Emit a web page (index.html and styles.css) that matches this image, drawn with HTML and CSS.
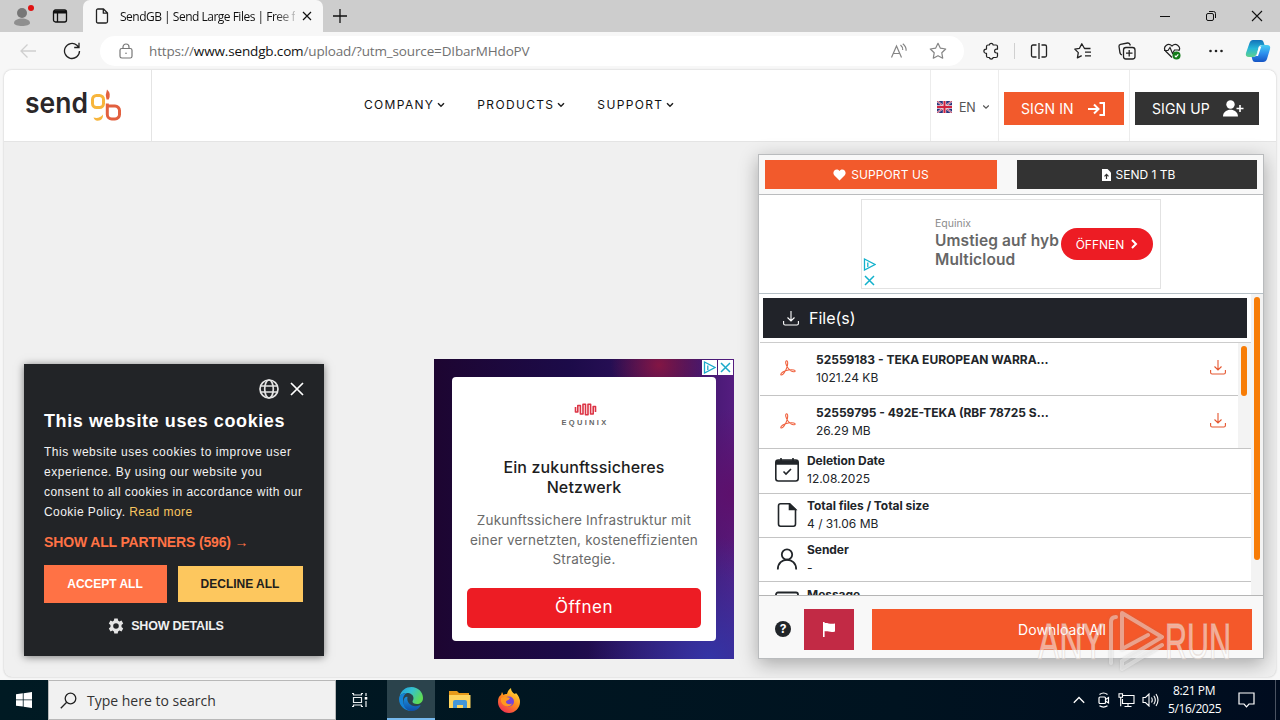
FILE: index.html
```html
<!DOCTYPE html>
<html lang="en">
<head>
<meta charset="utf-8">
<title>SendGB | Send Large Files</title>
<link rel="stylesheet" href="styles.css">
</head>
<body>
<div class="screen">
  <div class="tabstrip">
    <div class="profile"><svg width="24" height="28" viewBox="0 0 24 28"><circle cx="12" cy="13" r="5" fill="#777"/><path d="M4 23c0-6 16-6 16 0 0 4-16 4-16 0" fill="#8f8f8f"/><circle cx="21" cy="8" r="3" fill="#e01212"/></svg></div>
    <svg class="workspaces" width="16" height="16" viewBox="0 0 16 16" fill="none" stroke="#111" stroke-width="1.3"><rect x="1.5" y="2" width="13" height="12" rx="2"/><path d="M2 4h12" stroke-width="3"/><path d="M5.5 5v9"/></svg>
    <div class="tab">
      <svg width="14" height="16" viewBox="0 0 14 16" fill="none" stroke="#222" stroke-width="1.3" stroke-linejoin="round"><path d="M1.5 2.5q0-1.5 1.5-1.5h5.500l4 4v8.500q0 1.500-1.500 1.500h-8q-1.500 0-1.500-1.500zM8.300 1v4.200h4.200"/></svg>
      <span class="tab-title">SendGB | Send Large Files | Free f</span>
      <svg class="tab-x" width="10" height="10" viewBox="0 0 10 10" stroke="#111" stroke-width="1.200"><path d="M1 1l8 8M9 1l-8 8"/></svg>
    </div>
    <svg class="newtab" width="14" height="14" viewBox="0 0 14 14" stroke="#111" stroke-width="1.300"><path d="M7 0v14M0 7h14"/></svg>
    <div class="winbtns">
      <svg width="12" height="12" viewBox="0 0 12 12" stroke="#111"><path d="M1 6.500h10"/></svg>
      <svg width="12" height="12" viewBox="0 0 12 12" fill="none" stroke="#111"><rect x="1.500" y="3.500" width="7" height="7" rx="1.500"/><path d="M4 1.500h4.500q2 0 2 2v4.500"/></svg>
      <svg width="12" height="12" viewBox="0 0 12 12" stroke="#111" stroke-width="1.100"><path d="M1 1l10 10M11 1l-10 10"/></svg>
    </div>
  </div>

  <div class="toolbar">
    <svg class="back" width="18" height="16" viewBox="0 0 18 16" fill="none" stroke="#cfcfcf" stroke-width="1.300"><path d="M17 8H2M8.500 1.500L2 8l6.500 6.500"/></svg>
    <svg class="reload" width="18" height="18" viewBox="0 0 18 18" fill="none" stroke="#222" stroke-width="1.300"><path d="M16.500 9a7.500 7.500 0 1 1-2.600-5.700l1.600 1.700M16 .8v4.700h-4.800"/></svg>
    <div class="address">
      <svg class="lock" width="14" height="16" viewBox="0 0 14 16" fill="none" stroke="#777" stroke-width="1.200"><rect x="1" y="5.500" width="12" height="9.500" rx="1.800"/><path d="M4 5.500V4a3 3 0 0 1 6 0v1.500"/><circle cx="7" cy="10.200" r=".8" fill="#777" stroke="none"/></svg>
      <span class="url">https://<b>www.sendgb.com</b>/upload/?utm_source=DIbarMHdoPV</span>
      <svg class="read" width="18" height="16" viewBox="0 0 18 16" fill="none" stroke="#858585" stroke-width="1.200"><path d="M1.500 14.500L6.500 3l5 11.500M3.300 10.500h6.400M10.500 2q2.500 2 2.200 5M12.800.8q3.700 3 3.300 7"/></svg>
      <svg class="star" width="18" height="18" viewBox="0 0 18 18" fill="none" stroke="#858585" stroke-width="1.200" stroke-linejoin="round"><path d="M9 1.300l2.400 4.900 5.300.8-3.900 3.800.9 5.400L9 13.700l-4.700 2.500.9-5.400L1.300 7l5.300-.8z"/></svg>
    </div>
    <div class="tools">
      <svg width="18" height="18" viewBox="0 0 18 18" fill="none" stroke="#222" stroke-width="1.200" stroke-linejoin="round"><path d="M4.500 4.500q0-1.500 1.500-1.500h1.300a2 2 0 0 1 3.900 0h2.800q1.500 0 1.500 1.500v2.700h-1a1.900 1.900 0 0 0 0 3.800h1v3q0 1.500-1.500 1.500h-2.800a2 2 0 0 1-3.900 0H6q-1.500 0-1.500-1.500v-2.700H4a2.100 2.100 0 0 1 0-4.200h.5z"/></svg>
      <i class="sep"></i>
      <svg width="18" height="18" viewBox="0 0 18 18" fill="none" stroke="#222" stroke-width="1.300"><path d="M6.500 3H3Q1.500 3 1.500 4.500v9Q1.500 15 3 15h3.500M11.500 3H15q1.500 0 1.500 1.500v9Q16.500 15 15 15h-3.500M9 1v16"/></svg>
      <svg width="18" height="18" viewBox="0 0 18 18" fill="none" stroke="#222" stroke-width="1.300" stroke-linejoin="round"><path d="M16.500 6.500h-6L7.800 1.800 5.500 6.300l-4.700.8 3.500 3.500-.9 5.200 4.300-2.200M11 10.200h6M11 13.800h6"/></svg>
      <svg width="18" height="18" viewBox="0 0 18 18" fill="none" stroke="#222" stroke-width="1.300"><rect x="5.500" y="5.500" width="11.500" height="11.500" rx="2.500"/><path d="M11.200 8v6.500M8 11.200h6.500M4 13q-1.500-.5-2-2L1 4.500Q.8 2.800 2.500 2.300l7-1.300q1.800-.2 2.500 1.500l.3 1"/></svg>
      <svg width="18" height="18" viewBox="0 0 18 18" fill="none" stroke="#222" stroke-width="1.200"><path d="M9 15.500L2.500 9C-.5 5 5 0 9 4c4-4 9.500 1 6.800 5M1 8.500h4l2-3 2.500 6 2-3.500h5"/><circle cx="13.500" cy="13.500" r="4" fill="#137c19" stroke="none"/><path d="M11.800 13.600l1.200 1.200 2.300-2.500" stroke="#fff"/></svg>
      <svg width="18" height="18" viewBox="0 0 18 18" fill="#222"><circle cx="3.500" cy="9" r="1.300"/><circle cx="9" cy="9" r="1.300"/><circle cx="14.500" cy="9" r="1.300"/></svg>
    </div>
    <svg class="copilot" width="26" height="24" viewBox="0 0 26 24"><defs><linearGradient id="c1" x1="0" y1="0" x2="0" y2="1"><stop offset="0" stop-color="#1272b9"/><stop offset=".5" stop-color="#26b6d8"/><stop offset="1" stop-color="#5fd18c"/></linearGradient><linearGradient id="c2" x1="0" y1="0" x2="0" y2="1"><stop offset="0" stop-color="#47cff2"/><stop offset=".5" stop-color="#2c8fee"/><stop offset="1" stop-color="#1554c4"/></linearGradient></defs><path d="M8 1h8q2 0 2.500 2l1 3h-3q-2 0-2.500 2l-2 6q-1 4-4 4H4q-4 0-3-4L4.500 4Q5.500 1 8 1z" fill="url(#c1)"/><path d="M18 23h-8q-2 0-2.500-2l-.8-3H9q2 0 3-3l2.500-7q.8-2 3-2H22q4 0 3 4l-3 10q-1 3-4 3z" fill="url(#c2)"/><path d="M13.800 7.500h2.500l-3.300 9.500h-2.500q1-.6 1.500-2z" fill="#fff"/></svg>
  </div>

  <div class="page">
    <header class="site-head">
      <div class="logo">
        <svg width="100" height="36" viewBox="0 0 100 36" fill="none" stroke-width="3"><text class="logo-text" x="1" y="26.500" textLength="63" lengthAdjust="spacingAndGlyphs">send</text><rect x="68.500" y="9.500" width="11" height="12" rx="4" stroke="#f7b53c"/><path d="M83.300 17.500v11a4.500 4.500 0 0 0 4.500 4.500h3.200a4.500 4.500 0 0 0 4.500-4.500v-4a4.500 4.500 0 0 0-4.500-4.500h-7.700" stroke="#e2603f"/><path d="M83 3.500q4.500 4 1.700 10H82.500q-1.500-5 .5-10z" fill="#e2603f"/><path d="M69.500 31.500q6 1.500 9.500-3 .5 7-7 6-2-.8-2.500-3z" fill="#f7b53c"/></svg>
      </div>
      <nav class="nav">
        <a>COMPANY<svg width="8" height="6" viewBox="0 0 8 6"><path d="M1 1.200l3 3 3-3"/></svg></a>
        <a>PRODUCTS<svg width="8" height="6" viewBox="0 0 8 6"><path d="M1 1.200l3 3 3-3"/></svg></a>
        <a>SUPPORT<svg width="8" height="6" viewBox="0 0 8 6"><path d="M1 1.200l3 3 3-3"/></svg></a>
      </nav>
      <div class="lang">
        <svg width="15" height="12" viewBox="0 0 15 12"><rect width="15" height="12" rx="1" fill="#29337a"/><path d="M0 0l15 12M15 0L0 12" stroke="#d9d5e6" stroke-width="1.800"/><path d="M0 0l15 12M15 0L0 12" stroke="#d0223f" stroke-width=".8"/><path d="M7.500 0v12M0 6h15" stroke="#f3dfe6" stroke-width="3.400"/><path d="M7.500 0v12M0 6h15" stroke="#d0223f" stroke-width="2"/></svg>
        <span>EN</span>
        <svg class="chev" width="8" height="6" viewBox="0 0 8 6"><path d="M1.200 1.500L4 4.200l2.800-2.700"/></svg>
      </div>
      <div class="sign-cell"><a class="btn sign-in"><span>SIGN IN</span><svg width="17" height="14" viewBox="0 0 17 14" fill="none" stroke="#fff" stroke-width="2"><path d="M0 7h10M6 2.500L10.500 7 6 11.500M11.500 1H16v12h-4.500"/></svg></a></div>
      <a class="btn sign-up"><span>SIGN UP</span><svg width="21" height="17" viewBox="0 0 21 17" fill="#fff"><circle cx="7.500" cy="4.500" r="4.200"/><path d="M0 16.500c0-9 15-9 15 0zM16.200 5h1.600v2.700h2.700v1.600h-2.700V12h-1.600V9.300h-2.700V7.700h2.700z"/></svg></a>
    </header>

    <main class="content">
      <section class="cookie">
        <div class="cookie-tools">
          <svg width="20" height="20" viewBox="0 0 20 20" fill="none" stroke="#e4e4e4" stroke-width="1.700"><circle cx="10" cy="10" r="9"/><ellipse cx="10" cy="10" rx="4.300" ry="9"/><path d="M1.500 7h17M1.500 13h17"/></svg>
          <svg width="14" height="14" viewBox="0 0 14 14" stroke="#fff" stroke-width="1.700"><path d="M1 1l12 12M13 1L1 13"/></svg>
        </div>
        <h2>This website uses cookies</h2>
        <p>This website uses cookies to improve user<br>experience. By using our website you<br><span class="tight">consent to all cookies in accordance with our</span><br><span class="tight">Cookie Policy. <a>Read more</a></span></p>
        <div class="partners">SHOW ALL PARTNERS (596) →</div>
        <div class="cookie-btns"><span class="accept">ACCEPT ALL</span><span class="decline">DECLINE ALL</span></div>
        <div class="details"><svg width="16" height="16" viewBox="0 0 16 16"><path fill="#e4e4e4" fill-rule="evenodd" d="M6.300.5h3.400l.4 2.100 1.300.8 2.100-.8 1.700 2.900-1.700 1.500v2l1.700 1.500-1.700 2.900-2.100-.8-1.300.8-.4 2.100H6.300l-.4-2.100-1.300-.8-2.100.8-1.700-2.900L2.500 9V7L.8 5.500l1.700-2.900 2.100.8 1.300-.8zM8 5.200a2.800 2.800 0 1 0 0 5.600 2.800 2.800 0 0 0 0-5.600z"/></svg><span>SHOW DETAILS</span></div>
      </section>

      <section class="ad">
        <div class="adchoices">
          <span><svg width="13" height="13" viewBox="0 0 13 13" fill="none" stroke="#1aa9c9" stroke-width="1.300"><path d="M1.500 1L12 6.500 1.500 12zM4.800 4.500v4.500"/></svg></span>
          <span><svg width="11" height="11" viewBox="0 0 11 11" stroke="#1aa9c9" stroke-width="1.500"><path d="M1 1l9 9M10 1l-9 9"/></svg></span>
        </div>
        <div class="ad-card">
          <svg class="eq-mark" width="24" height="13" viewBox="0 0 24 13" fill="none" stroke="#dc3445" stroke-width="1.600" stroke-linejoin="round"><path d="M1.500 4v5h2.300V2.500h2.600v8.500H9V1.200h2.500v10.600H14V1.200h2.600V11h2.600V3.500h2.300V9"/></svg>
          <span class="eq-name">EQUINIX</span>
          <h3>Ein zukunftssicheres<br>Netzwerk</h3>
          <p>Zukunftssichere Infrastruktur mit<br>einer vernetzten, kosteneffizienten<br>Strategie.</p>
          <span class="ad-btn">Öffnen</span>
        </div>
      </section>

      <section class="panel">
        <div class="panel-top">
          <span class="support"><svg width="13" height="12" viewBox="0 0 13 12"><path fill="#fff" d="M6.500 11.500L1.200 6.200C-1.500 3 3-1.800 6.500 2 10-1.800 14.500 3 11.800 6.200z"/></svg>SUPPORT US</span>
          <span class="send"><svg width="9" height="12" viewBox="0 0 9 12"><path fill="#fff" d="M0 0h5.500L9 3.500V12H0z"/><path d="M4.500 10V5.500M2.500 7.300l2-2 2 2" fill="none" stroke="#333" stroke-width="1.200"/></svg>SEND 1 TB</span>
        </div>
        <div class="banner-row">
          <div class="banner">
            <div class="banner-ctl"><svg width="13" height="13" viewBox="0 0 13 13" fill="none" stroke="#12b1cc" stroke-width="1.300"><path d="M1.500 1L12 6.500 1.500 12zM4.800 4.500v4.500"/></svg><svg width="11" height="11" viewBox="0 0 11 11" stroke="#12b1cc" stroke-width="1.500"><path d="M1 1l9 9M10 1l-9 9"/></svg></div>
            <div class="banner-text"><small>Equinix</small><strong>Umstieg auf hyb<br>Multicloud</strong></div>
            <span class="open">ÖFFNEN<svg width="7" height="10" viewBox="0 0 7 10" fill="none" stroke="#fff" stroke-width="2"><path d="M1 1l4 4-4 4"/></svg></span>
          </div>
        </div>
        <div class="scroll">
          <div class="scroll-body">
            <div class="files-bar"><svg width="16" height="15" viewBox="0 0 16 15" fill="none" stroke="#fff" stroke-width="1.100"><path d="M8 0v10M4.500 6.500L8 10l3.500-3.500M.6 10v2.500q0 1.500 1.500 1.500h11.800q1.500 0 1.500-1.500V10"/></svg>File(s)</div>
            <div class="list">
              <div class="rows">
                <div class="file">
                  <svg class="pdf" width="16" height="16" viewBox="0 0 16 16"><path d="M6.500.8C4.800 1.500 6 5.500 8 8c2 2.600 5 4.200 6.800 3.600 1.500-1.200-2-2.400-6.300-1.600C4 10.800.5 13 .8 14.700c1.800 1.300 5-3.700 6.200-7.500C7.800 4.500 8.200.7 6.500.8z"/></svg>
                  <div class="fname"><b>52559183 - TEKA EUROPEAN WARRA...</b><span>1021.24 KB</span></div>
                  <svg class="dl" width="16" height="15" viewBox="0 0 16 15"><path d="M8 0v10M4.500 6.500L8 10l3.500-3.500M.6 10v2.500q0 1.500 1.500 1.500h11.800q1.500 0 1.500-1.500V10"/></svg>
                </div>
                <div class="file">
                  <svg class="pdf" width="16" height="16" viewBox="0 0 16 16"><path d="M6.500.8C4.800 1.500 6 5.500 8 8c2 2.600 5 4.200 6.800 3.600 1.500-1.200-2-2.400-6.300-1.600C4 10.800.5 13 .8 14.700c1.800 1.300 5-3.700 6.200-7.500C7.800 4.500 8.200.7 6.500.8z"/></svg>
                  <div class="fname"><b>52559795 - 492E-TEKA (RBF 78725 S...</b><span>26.29 MB</span></div>
                  <svg class="dl" width="16" height="15" viewBox="0 0 16 15"><path d="M8 0v10M4.500 6.500L8 10l3.500-3.500M.6 10v2.500q0 1.500 1.500 1.500h11.800q1.500 0 1.500-1.500V10"/></svg>
                </div>
              </div>
              <div class="track inner"><i></i></div>
            </div>
            <div class="info first"><svg width="24" height="24" viewBox="0 0 24 24" fill="none" stroke="#212529" stroke-width="1.600"><rect x=".8" y="2" width="22.400" height="21" rx="2.500"/><path d="M1 4.500h22" stroke-width="4.500"/><path d="M6 0v3M18 0v3M8.500 13.500l2.500 2.500 5-5"/></svg><div><b>Deletion Date</b><span>12.08.2025</span></div></div>
            <div class="info"><svg width="24" height="24" viewBox="0 0 24 24" fill="none" stroke="#212529" stroke-width="1.600"><path d="M14.500.8H5.500Q3.500.8 3.500 3v18q0 2.200 2 2.200h13q2 0 2-2.200V6.500z"/><path d="M14.500.8v5.700h6z" fill="#212529"/></svg><div><b>Total files / Total size</b><span>4 / 31.06 MB</span></div></div>
            <div class="info"><svg width="24" height="24" viewBox="0 0 24 24" fill="none" stroke="#212529" stroke-width="1.800"><circle cx="12" cy="7.500" r="5.200"/><path d="M2.800 22.500c0-13 18.400-13 18.400 0"/></svg><div><b>Sender</b><span>-</span></div></div>
            <div class="info msg"><svg width="24" height="24" viewBox="0 0 24 24" fill="none" stroke="#212529" stroke-width="1.800"><rect x="1" y="1.500" width="22" height="18" rx="2"/></svg><div><b>Message</b></div></div>
          </div>
          <div class="track outer"><i></i></div>
        </div>
        <div class="panel-foot">
          <span class="help">?</span>
          <span class="flag"><svg width="14" height="15" viewBox="0 0 14 15" fill="#fff"><path d="M1 0h1.600v15H1zM2 1.500c3-1.500 5 1.200 11 0v8c-5 1.500-7-1-11 0z"/></svg></span>
          <span class="download">Download All</span>
        </div>
      </section>
    </main>
  </div>

  <div class="taskbar">
    <span class="start"><svg width="16" height="16" viewBox="0 0 16 16" fill="#fff"><path d="M0 2.300L6.800 1.300v6.200H0zM7.600 1.200L16 0v7.500H7.600zM0 8.300h6.800v6.300L0 13.700zM7.600 8.300H16V16l-8.400-1.200z"/></svg></span>
    <div class="search"><svg width="17" height="17" viewBox="0 0 17 17" fill="none" stroke="#222" stroke-width="1.300"><circle cx="10.500" cy="6.500" r="5.300"/><path d="M6.700 10.300L.8 16.200"/></svg><span>Type here to search</span></div>
    <span class="task"><svg width="16" height="16" viewBox="0 0 16 16" fill="none" stroke="#e9eef0" stroke-width="1.200"><path d="M0 1.500h1.500V3h8V1.500H11M0 14.500h1.500V13h8v1.500H11M1.500 5.500h8v5h-8zM14 1v3M14 9v6"/><rect x="12.700" y="5" width="2.600" height="2.600" fill="#fff" stroke="none"/></svg></span>
    <span class="task active"><svg width="26" height="26" viewBox="0 0 26 26"><defs><linearGradient id="e1" x1="0" y1="0" x2="1" y2=".5"><stop offset="0" stop-color="#1e9de0"/><stop offset=".5" stop-color="#35c1cf"/><stop offset="1" stop-color="#5edb55"/></linearGradient><linearGradient id="e2" x1="0" y1="0" x2="0" y2="1"><stop offset="0" stop-color="#1b8fdc"/><stop offset="1" stop-color="#0f4fa8"/></linearGradient></defs><path d="M1.500 11C3 4 8 1 13.500 1 20 1 25 6 25 12c0 4-3 6-6 6-3 0-4.500-1-4.500-2.500 0-1 1-1.500 1-3.500 0-3-3-5-6.500-5C5 7 2.500 8.500 1.500 11z" fill="url(#e1)"/><path d="M1 13c0-4 3.500-6 8-6-3 1.500-4 4-4 7 0 6 4 10 9.500 11C7 25.500 1 20 1 13z" fill="#1483d6"/><path d="M9.500 11c-1.500 6 5 11 11.500 8.500 1-.5 1.800-.5 1.300.5-2 3.500-5 5-8.500 5C7 25 4 18 6 13c1-2 2.500-2.500 3.500-2z" fill="url(#e2)"/></svg></span>
    <span class="task"><svg width="22" height="20" viewBox="0 0 22 20"><path d="M0 1h8l2 2h10v4H0z" fill="#e79a1a"/><path d="M0 5h21.500v13H0z" fill="#ffd45e"/><path d="M4 18v-6q0-2 2-2h10q2 0 2 2v6h-4v-3H8v3z" fill="#4596d8"/></svg></span>
    <span class="task"><svg width="24" height="25" viewBox="0 0 24 25"><defs><linearGradient id="f1" x1=".8" y1="0" x2=".2" y2="1"><stop offset="0" stop-color="#ffe53d"/><stop offset=".5" stop-color="#ff8a1c"/><stop offset="1" stop-color="#f02a57"/></linearGradient></defs><path d="M5 4l1.500 3Q8 5.500 10 6q0-3 4-6 0 4 4 6l1-1q4 4 4 9c0 6-5 11-11 11S1 20 1 14c0-4 1-6 3-7z" fill="url(#f1)"/><circle cx="12" cy="13.500" r="5" fill="#7446d8"/><path d="M4 10q4-2 9 0-1 2-3 2.500c-3 2 1 5 5 3-1 4-9 4-11-2z" fill="#ff9820"/></svg></span>
    <div class="tray">
      <svg width="12" height="8" viewBox="0 0 12 8" fill="none" stroke="#fff" stroke-width="1.300"><path d="M.8 6.800L6 1.500l5.200 5.300"/></svg>
      <svg width="14" height="16" viewBox="0 0 14 16" fill="none" stroke="#fff" stroke-width="1.200"><rect x="2" y="5" width="6.500" height="6.500" rx="1"/><path d="M8.500 7.500l3-2v5.500l-3-2M2.500 2.500Q6.500-.5 10.500 2.500M2.500 13.800q4 2.500 8 0"/></svg>
      <svg width="17" height="15" viewBox="0 0 17 15" fill="none" stroke="#fff" stroke-width="1.100"><path d="M5 2.500h11v8H4.500V6M10 10.500v3M6.500 13.500h7M1 .8h3.500v3.500H1zM2.700 4.300v9"/></svg>
      <svg width="17" height="14" viewBox="0 0 17 14" fill="none" stroke="#fff" stroke-width="1.100"><path d="M1 4.500h2.500L7 1v12L3.500 9.500H1zM9.500 4.500q1.500 2.500 0 5M11.800 2.800q3 4.200 0 8.400M14 1q4 6 0 12"/></svg>
      <div class="clock">8:21 PM<br><span>5/16/2025</span></div>
      <svg class="note" width="17" height="16" viewBox="0 0 17 16" fill="none" stroke="#fff" stroke-width="1.200"><path d="M1 1h15v11h-5l-2.500 2.800L6 12H1z"/></svg>
      <i class="peek"></i>
    </div>
  </div>

  <svg class="watermark" width="200" height="64" viewBox="0 0 200 64">
    <g class="wm-text"><text x="2" y="50" textLength="66" lengthAdjust="spacingAndGlyphs">ANY</text><text x="129" y="50" textLength="66" lengthAdjust="spacingAndGlyphs">RUN</text></g>
    <path class="wm-mark" d="M75 54V13q0-5 5-5M86 40V4l40 24-40 24M86 60l40-24M86 52v8M86 40l26-14"/>
  </svg>
</div>
</body>
</html>
```
FILE: styles.css
```css
* { box-sizing: border-box; }
body { margin: 0; font-family: Inter, "Liberation Sans", sans-serif; color: #212529; }
svg { flex: none; display: block; }
.screen { position: relative; width: 1280px; height: 720px; overflow: hidden; display: flex; flex-direction: column; background: #f7f7f7; }

.tabstrip { height: 32px; flex: none; display: flex; align-items: center; background: #cdcdcd; font-family: "Open Sans", "Noto Sans", sans-serif; }
.profile { margin-left: 10px; width: 24px; height: 32px; }
.workspaces { margin-left: 18px; }
.tab { margin-left: 15px; width: 240px; height: 32px; background: #f7f7f7; border-radius: 7px 7px 0 0; display: flex; align-items: center; padding-left: 12px; }
.tab-title { margin-left: 11px; width: 175px; font-size: 12px; letter-spacing: -.5px; white-space: nowrap; color: #111; -webkit-mask-image: linear-gradient(90deg, #000 88%, rgba(0,0,0,.25)); }
.tab-x { margin-left: 7px; }
.newtab { margin-left: 10px; }
.winbtns { margin-left: auto; margin-right: 17px; display: flex; gap: 34px; }

.toolbar { height: 38px; flex: none; display: flex; align-items: center; background: #f7f7f7; }
.back { margin-left: 19px; }
.reload { margin-left: 26px; }
.address { margin-left: 19px; width: 864px; height: 30px; border-radius: 15px; background: #fff; display: flex; align-items: center; font-family: "Open Sans", "Noto Sans", sans-serif; font-size: 13.500px; color: #717171; }
.lock { margin-left: 19px; }
.url { margin-left: 16px; white-space: nowrap; letter-spacing: -.15px; }
.url b { font-weight: 400; color: #111; }
.read { margin-left: auto; }
.star { margin: 0 17px 0 21px; }
.tools { margin-left: 18px; display: flex; align-items: center; width: 243px; justify-content: space-between; }
.sep { width: 1px; height: 16px; background: #d0d0d0; margin: 0 -12px; }
.copilot { margin-left: 20px; }

.page { width: 1272px; height: 607px; flex: none; margin: 0 4px; border-radius: 8px; overflow: hidden; background: #f0f0f0; box-shadow: 0 0 2px #bbb; display: flex; flex-direction: column; }
.site-head { height: 72px; flex: none; background: #fff; border-bottom: 1px solid #e4e4e4; display: flex; align-items: center; }
.logo { width: 148px; height: 100%; border-right: 1px solid #e4e4e4; padding: 16px 0 0 20px; display: flex; }
.logo-text { font-weight: 600; font-size: 28px; fill: #2b2729; }
.nav { margin-left: 212px; display: flex; gap: 32px; font-size: 12px; font-weight: 400; letter-spacing: 1.33px; color: #111; margin-top: -2px; }
.nav a { display: flex; align-items: center; gap: 3px; }
.nav path, .chev path { fill: none; stroke: #222; stroke-width: 1.5; }
.chev path { stroke: #555; stroke-width: 1.200; }
.lang { margin-left: auto; width: 69px; height: 100%; border-left: 1px solid #ececec; border-right: 1px solid #ececec; display: flex; align-items: center; padding: 3px 0 0 6px; font-size: 12.500px; color: #555; }
.lang span { margin: 0 7px 0 7px; letter-spacing: -.3px; }
.btn { display: flex; align-items: center; height: 33px; color: #fff; font-size: 14px; letter-spacing: .1px; margin-top: 6px; white-space: nowrap; }
.sign-cell { width: 131px; height: 100%; border-right: 1px solid #ececec; display: flex; align-items: center; padding-left: 5px; }
.sign-in { width: 120px; background: #f25a2c; padding: 0 19px 0 17px; justify-content: space-between; }
.sign-up { width: 124px; background: #333; padding: 0 15px 0 17px; justify-content: space-between; margin-left: 5px; margin-right: 17px; }

.content { flex: 1; display: flex; align-items: flex-end; padding: 0 12px 18px 20px; }
.cookie { width: 300px; height: 292px; margin-bottom: 3px; background: #222427; box-shadow: 0 1px 8px rgba(0,0,0,.5); padding: 15px 20px; font-family: "Liberation Sans", Arial, sans-serif; color: #fff; display: flex; flex-direction: column; }
.cookie-tools { display: flex; justify-content: flex-end; align-items: center; gap: 11px; height: 20px; }
.cookie h2 { margin: 10px 0 0; font-size: 18px; line-height: 24px; letter-spacing: .6px; white-space: nowrap; }
.cookie p { margin: 9px 0 0; font-size: 12px; line-height: 20px; letter-spacing: .54px; white-space: nowrap; color: #f2f2f2; }
.tight { letter-spacing: .45px; }
.cookie p a { color: #f9c660; }
.partners { color: #ff7245; font-weight: 700; font-size: 14px; line-height: 20px; margin-top: 10px; white-space: nowrap; letter-spacing: -.15px; }
.cookie-btns { display: flex; align-items: center; gap: 11px; margin-top: 13px; font-size: 12px; font-weight: 700; text-align: center; }
.accept { width: 123px; line-height: 38px; background: #ff7245; padding-right: 1px; }
.decline { width: 125px; line-height: 36px; background: #fdc75e; color: #22201c; padding-right: 1px; }
.details { display: flex; justify-content: center; align-items: center; gap: 7px; font-size: 12.500px; font-weight: 700; margin-top: 15px; padding-right: 16px; color: #f0f0f0; letter-spacing: -.2px; }

.ad { margin-left: 110px; width: 300px; height: 300px; position: relative; padding: 18px; background: radial-gradient(circle at 75% 2%, rgba(140,22,65,.9), transparent 13%), radial-gradient(circle at 92% 100%, #3334a5, transparent 30%), radial-gradient(circle at 100% 45%, #5d106c, transparent 25%), linear-gradient(90deg, #1d0531, #1c0b49 45%, #331362 80%, #551d80); }
.adchoices { position: absolute; top: 1px; right: 1px; display: flex; gap: 1px; }
.adchoices span { width: 15px; height: 15px; background: #fff; display: flex; align-items: center; justify-content: center; }
.ad-card { height: 264px; background: #fff; border-radius: 4px; display: flex; flex-direction: column; align-items: center; text-align: center; }
.eq-mark { margin-top: 26px; margin-left: 4px; }
.eq-name { font-family: "Liberation Sans", sans-serif; font-size: 7.500px; font-weight: 700; line-height: 9px; letter-spacing: 2.300px; margin: 2px 0 0 2px; color: #666; }
.ad-card h3 { margin: 30px 0 0; font-size: 16px; line-height: 20px; font-weight: 500; color: #1d1d1d; letter-spacing: .13px; }
.ad-card p { margin: 14px 0 0; font-size: 13.500px; line-height: 19.500px; letter-spacing: .18px; color: #6a6a6a; white-space: nowrap; }
.ad-btn { margin-top: 18px; width: 234px; height: 40px; border-radius: 5px; background: #ed1c24; color: #fff; font-size: 17px; line-height: 39px; letter-spacing: .5px; }

.panel { margin-left: 24px; width: 506px; height: 505px; border: 1px solid #b9bbbd; background: #fff; box-shadow: 0 5px 18px rgba(0,0,0,.3); display: flex; flex-direction: column; }
.panel-top { height: 40px; flex: none; border-bottom: 1px solid #babcbe; background: #f8f8f8; padding: 5px 6px; display: flex; gap: 20px; font-size: 12px; color: #fff; }
.panel-top span { height: 29px; display: flex; align-items: center; justify-content: center; gap: 5px; }
.support { width: 232px; background: #f25a2c; letter-spacing: .1px; }
.send { width: 240px; background: #333; padding-left: 3px; }
.banner-row { height: 99px; flex: none; border-bottom: 1px solid #b6c0c6; padding: 4px 0 0 102px; }
.banner { width: 300px; height: 90px; border: 1px solid #e2e2e2; display: flex; align-items: center; }
.banner-ctl { align-self: flex-end; width: 73px; display: flex; flex-direction: column; gap: 4px; padding: 0 0 2px 1px; }
.banner-ctl svg:last-child { margin-left: 1px; }
.banner-text { width: 126px; white-space: nowrap; display: flex; flex-direction: column; margin-top: -2px; }
.banner-text small { font-size: 10.500px; line-height: 14px; color: #8c8c8c; }
.banner-text strong { font-size: 15.500px; line-height: 19px; color: #666; font-weight: 600; letter-spacing: .1px; }
.open { width: 92px; height: 32px; border-radius: 16px; background: #ed1c24; color: #fff; font-size: 12px; display: flex; align-items: center; justify-content: center; gap: 7px; }
.scroll { height: 302px; flex: none; display: flex; overflow: hidden; border-bottom: 1px solid #b5b5b5; }
.scroll-body { width: 492px; }
.files-bar { margin: 4px 4px 4px; height: 40px; background: #212329; color: #fff; display: flex; align-items: center; gap: 10px; padding-left: 20px; font-size: 16px; }
.list { display: flex; height: 106px; border-top: 1px solid #ccc; margin-left: 1px; }
.rows { width: 478px; }
.file { height: 53px; border-bottom: 1px solid #c4c4c4; display: flex; align-items: center; padding: 0 12px 2px 20px; }
.pdf path { fill: none; stroke: #f0623f; stroke-width: 1.100; }
.dl { margin-top: -1px; }
.dl path { fill: none; stroke: #e5562f; stroke-width: 1.100; }
.fname { margin: 1px 0 0 20px; flex: 1; display: flex; flex-direction: column; font-size: 12px; line-height: 18px; white-space: nowrap; }
.track { background: #f3f3f3; flex: none; }
.track i { display: block; background: #f77c06; border-radius: 3px; width: 6px; }
.inner { width: 13px; padding: 3px 0 0 3px; }
.inner i { height: 50px; }
.outer { width: 12px; padding: 3px 0 0 3px; }
.outer i { height: 263px; }
.info { height: 44px; border-top: 1px solid #c4c4c4; display: flex; align-items: flex-start; gap: 8px; padding: 9px 0 0 16px; }
.info.first { height: 45px; }
.info div { display: flex; flex-direction: column; font-size: 12px; line-height: 18px; margin-top: -6px; }
.info b { letter-spacing: -.05px; }
.info.msg div { margin-top: -5px; }
.panel-foot { flex: 1; background: #f8f8f8; display: flex; align-items: center; padding: 4px 11px 0 16px; }
.help { width: 16px; height: 16px; border-radius: 50%; background: #212529; color: #fff; font-size: 12px; font-weight: 700; line-height: 16px; text-align: center; }
.flag { margin-left: 13px; width: 50px; height: 41px; background: #c22a45; display: flex; align-items: center; justify-content: center; }
.download { margin-left: 18px; width: 380px; height: 41px; background: #f4582a; color: #fff; font-size: 14px; letter-spacing: .12px; line-height: 41px; text-align: center; }

.taskbar { height: 40px; flex: none; margin-top: 3px; background: linear-gradient(90deg, #001a23, #001320 70%, #000c1f); display: flex; align-items: center; font-family: "Open Sans", "Noto Sans", sans-serif; }
.start { width: 48px; display: flex; justify-content: center; }
.search { width: 288px; height: 40px; background: #f1f1f1; border: 1px solid #b8b8b8; display: flex; align-items: center; padding-left: 11px; font-size: 14px; color: #333; }
.search span { margin-left: 10px; white-space: nowrap; }
.task { width: 48px; height: 40px; display: flex; align-items: center; justify-content: center; margin-right: 1px; }
.search + .task { margin-right: 3px; }
.active { background: #2b434c; border-bottom: 2px solid #76b9ed; }
.tray { margin-left: auto; height: 40px; display: flex; align-items: center; color: #fff; }
.tray > svg { margin-right: 9px; }
.tray > svg:nth-child(1) { margin-right: 12px; }
.tray > svg:nth-child(2), .tray > svg:nth-child(3) { margin-right: 7px; }
.clock { width: 52px; text-align: center; font-size: 12px; line-height: 18px; letter-spacing: -.4px; white-space: nowrap; }
.tray > .note { margin: 0 20px 0 18px; }
.peek { width: 1px; height: 40px; background: #4a5362; margin-right: 4px; }

.watermark { position: absolute; left: 1036px; top: 609px; }
.wm-text { font-family: "Liberation Sans", sans-serif; font-size: 50px; fill: rgba(255,255,255,.5); stroke: rgba(215,200,192,.5); stroke-width: 1.300; }
.wm-mark { fill: none; stroke: rgba(255,255,255,.42); stroke-width: 4; stroke-linejoin: round; stroke-linecap: round; filter: drop-shadow(0 0 1px rgba(120,120,120,.6)); }
```
